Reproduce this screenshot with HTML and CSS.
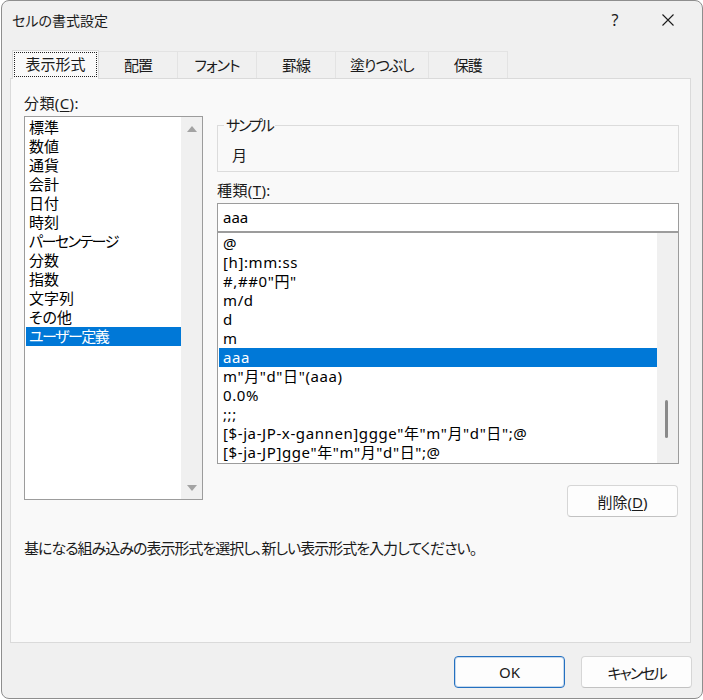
FILE: index.html
```html
<!DOCTYPE html>
<html lang="ja">
<head>
  <meta charset="UTF-8" />
  <meta name="viewport" content="width=device-width, initial-scale=1.0" />
  <title>セルの書式設定</title>
  <link rel="stylesheet" href="styles.css">
</head>
<body>

  <div class="dialog">

    <!-- Title bar -->
    <header class="titlebar">
      <span class="title">セルの書式設定</span>
      <span class="help">?</span>
      <span class="close">
        <svg width="12" height="12" viewBox="0 0 12 12">
          <path d="M0.5 0.5 L11.5 11.5 M11.5 0.5 L0.5 11.5" stroke="#1b1b1b" stroke-width="1.1" fill="none" />
        </svg>
      </span>
    </header>

    <!-- Tabs -->
    <nav class="tabs">
      <div class="tab active">表示形式</div>
      <div class="tab">配置</div>
      <div class="tab">フォント</div>
      <div class="tab">罫線</div>
      <div class="tab">塗りつぶし</div>
      <div class="tab">保護</div>
    </nav>

    <!-- Number format page -->
    <section class="panel">
      <div class="columns">

        <div class="col-left">
          <div class="label">分類(<u>C</u>):</div>
          <div class="listbox category-list">
            <ul class="items">
              <li>標準</li>
              <li>数値</li>
              <li>通貨</li>
              <li>会計</li>
              <li>日付</li>
              <li>時刻</li>
              <li class="kana">パーセンテージ</li>
              <li>分数</li>
              <li>指数</li>
              <li>文字列</li>
              <li>その他</li>
              <li class="kana selected">ユーザー定義</li>
            </ul>
            <div class="scrollbar with-arrows">
              <span class="arrow up"></span>
              <span class="arrow down"></span>
            </div>
          </div>
        </div>

        <div class="col-right">
          <fieldset class="sample">
            <legend>サンプル</legend>
            <div class="sample-value">月</div>
          </fieldset>

          <div class="label type-label">種類(<u>T</u>):</div>
          <div class="textbox">aaa</div>
          <div class="listbox format-list">
            <ul class="items">
              <li>@</li>
              <li>[h]:mm:ss</li>
              <li>#,##0"円"</li>
              <li>m/d</li>
              <li>d</li>
              <li>m</li>
              <li class="selected">aaa</li>
              <li>m"月"d"日"(aaa)</li>
              <li>0.0%</li>
              <li>;;;</li>
              <li>[$-ja-JP-x-gannen]ggge"年"m"月"d"日";@</li>
              <li>[$-ja-JP]gge"年"m"月"d"日";@</li>
            </ul>
            <div class="scrollbar">
              <span class="thumb"></span>
            </div>
          </div>

          <div class="actions">
            <button class="btn">削除(<u>D</u>)</button>
          </div>
        </div>

      </div>

      <p class="hint">基になる組み込みの表示形式を選択し、新しい表示形式を入力してください。</p>
    </section>

    <footer class="footer">
      <button class="btn default">OK</button>
      <button class="btn kana">キャンセル</button>
    </footer>

  </div>

</body>
</html>
```

FILE: styles.css
```css
* {
  box-sizing: border-box;
}

body {
  margin: 0;
  background-color: #ffffff;
  font-family: "Noto Sans", "Noto Sans CJK JP", sans-serif;
  font-size: 15px;
  color: #1b1b1b;
  font-feature-settings: "palt";
}

u {
  text-underline-offset: 2px;
}

/* Window frame */
.dialog {
  width: 702px;
  height: 699px;
  margin-left: 1px;
  border: 1px solid #8e8e8e;
  border-radius: 8px;
  background-color: #f0f0f0;
  display: flex;
  flex-direction: column;
  overflow: hidden;
}

.titlebar {
  height: 38px;
  display: flex;
  align-items: center;
  padding-left: 10px;
}

.title {
  font-size: 14px;
}

.help {
  margin-left: auto;
  width: 20px;
  text-align: center;
  font-size: 16px;
}

.close {
  width: 20px;
  margin-left: 33px;
  margin-right: 24px;
  display: flex;
  justify-content: center;
}

/* Tab strip */
.tabs {
  display: flex;
  align-items: flex-end;
  height: 28px;
  margin-top: 11px;
  padding-left: 10px;
}

.tab {
  height: 27px;
  min-width: 80px;
  padding: 0 14px 2px;
  margin-right: -1px;
  border: 1px solid #e3e3e3;
  border-bottom: none;
  background-color: #f0f0f0;
  letter-spacing: -1px;
  display: flex;
  align-items: center;
  justify-content: center;
}

.tab.active {
  position: relative;
  z-index: 1;
  height: 29px;
  min-width: 87px;
  margin-bottom: -1px;
  padding: 0 10px 3px;
  border-color: #dadada;
  background-color: #f9f9f9;
  letter-spacing: 0;
  outline: 1px dotted #222;
  outline-offset: -3px;
}

/* Page content */
.panel {
  flex: 1;
  margin: 0 11px 0 8px;
  padding: 14px 11px 0 13px;
  border: 1px solid #dadada;
  background-color: #f9f9f9;
}

.columns {
  display: grid;
  grid-template-columns: 179px 462px;
  column-gap: 14px;
  align-items: start;
}

.label {
  line-height: 20px;
  letter-spacing: 0.4px;
}

.category-list {
  margin-top: 3px;
  height: 384px;
}

.col-right {
  padding-top: 25px;
}

.sample {
  margin: 0;
  height: 54px;
  padding: 0 0 0 6px;
  border: 1px solid #dcdcdc;
}

.sample legend {
  padding: 0 2px;
  line-height: 14px;
  letter-spacing: -2px;
}

.sample-value {
  margin: 13px 0 0 8px;
  line-height: 20px;
}

.type-label {
  margin-top: 8px;
}

.textbox {
  margin-top: 3px;
  height: 29px;
  padding-left: 5px;
  line-height: 27px;
  border: 1px solid #9c9c9c;
  background-color: #ffffff;
  color: #000;
}

/* List boxes */
.listbox {
  display: flex;
  border: 1px solid #9c9c9c;
  background-color: #ffffff;
  color: #000;
}

.format-list {
  height: 232px;
  overflow: hidden;
  letter-spacing: 0.6px;
}

.items {
  flex: 1;
  list-style: none;
  margin: 0;
  padding: 1px 0 0 1px;
  overflow: hidden;
}

.items li {
  height: 19px;
  line-height: 19px;
  padding-left: 3px;
  white-space: nowrap;
}

.items li.kana {
  letter-spacing: -1.5px;
}

.format-list .items li {
  padding-left: 4px;
}

.items li.selected {
  background-color: #0078d7;
  color: #ffffff;
}

.scrollbar {
  width: 21px;
  background-color: #f0f0f0;
  display: flex;
  flex-direction: column;
}

.scrollbar.with-arrows {
  justify-content: space-between;
  align-items: center;
  padding: 9px 0 8px;
}

.arrow {
  width: 0;
  height: 0;
  border-left: 5px solid transparent;
  border-right: 5px solid transparent;
}

.arrow.up {
  border-bottom: 6px solid #a3a3a3;
}

.arrow.down {
  border-top: 6px solid #a3a3a3;
}

.thumb {
  width: 3px;
  height: 38px;
  margin: 167px 0 0 8px;
  border-radius: 2px;
  background-color: #8a8a8a;
}

.actions {
  display: flex;
  justify-content: flex-end;
  margin-top: 21px;
  padding-right: 1px;
}

/* Buttons */
.btn {
  width: 111px;
  height: 32px;
  padding: 0;
  font-family: inherit;
  font-size: 15px;
  font-feature-settings: "palt";
  color: #1b1b1b;
  background-color: #fdfdfd;
  border: 1px solid #d6d6d6;
  border-bottom-color: #c2c2c2;
  border-radius: 4px;
}

.btn.kana {
  letter-spacing: -2px;
}

.btn.default {
  border: 1px solid #2470c0;
  box-shadow: inset 0 0 0 1px rgba(36, 112, 192, 0.25);
}

.hint {
  margin: 21px 0 0;
  line-height: 20px;
  letter-spacing: -1px;
}

.footer {
  height: 55px;
  display: flex;
  justify-content: flex-end;
  gap: 16px;
  padding: 13px 10px 0 0;
}
```
